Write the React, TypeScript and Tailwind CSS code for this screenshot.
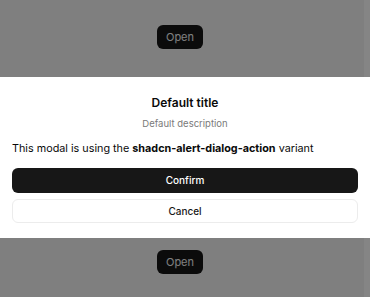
export default function App() {
  return (
    <div className="relative h-[297px] w-[370px] overflow-hidden bg-white" style={{ fontFamily: "Inter, 'Noto Sans', sans-serif" }}>
      <div className="flex h-full w-[360px] flex-col items-center justify-between pt-[25px] pb-[23px]">
        <button className="h-[24px] w-[46px] rounded-[6px] bg-[#171717] text-[11px] font-normal text-white">Open</button>
        <button className="h-[24px] w-[46px] rounded-[6px] bg-[#171717] text-[11px] font-normal text-white">Open</button>
      </div>
      <div className="absolute inset-0 bg-black/50" />
      <div className="absolute right-0 top-0 bottom-0 w-[6px] bg-white/[0.05]" />
      <div className="absolute left-0 right-0 top-[77px] flex h-[161px] flex-col bg-white px-3 pt-[18px] text-[#0a0a0a]">
        <h2 className="text-center text-[12px] font-semibold leading-[16px]">Default title</h2>
        <p className="mt-[6px] text-center text-[9.5px] leading-[14px] text-[#7a7a7a]">Default description</p>
        <p className="mt-[10px] text-[10.8px] leading-[16px]">
          This modal is using the <span className="font-bold">shadcn-alert-dialog-action</span> variant
        </p>
        <button className="mt-[11px] h-[25px] w-full rounded-[6px] bg-[#171717] text-[10px] font-medium text-white">Confirm</button>
        <button className="mt-[6px] h-[24px] w-full rounded-[6px] border border-[#ececec] bg-white text-[10px] font-medium text-[#171717]">Cancel</button>
      </div>
    </div>
  );
}
